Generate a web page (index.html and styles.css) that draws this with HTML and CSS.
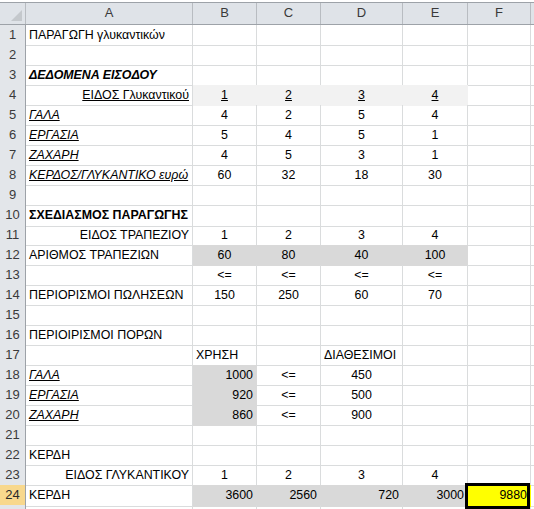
FILE: index.html
```html
<!DOCTYPE html>
<html>
<head>
<meta charset="utf-8">
<link rel="stylesheet" href="styles.css">
</head>
<body>
<div class="sheet">
  <div class="row hdr">
    <div class="corner"><span class="tri"></span></div>
    <div class="ch">A</div><div class="ch">B</div><div class="ch">C</div><div class="ch">D</div><div class="ch">E</div><div class="ch">F</div><div class="ch last"></div>
  </div>

  <div class="row"><div class="rh">1</div><div class="c">ΠΑΡΑΓΩΓΗ γλυκαντικών</div><div class="c"></div><div class="c"></div><div class="c"></div><div class="c"></div><div class="c"></div><div class="c"></div></div>
  <div class="row"><div class="rh">2</div><div class="c"></div><div class="c"></div><div class="c"></div><div class="c"></div><div class="c"></div><div class="c"></div><div class="c"></div></div>
  <div class="row"><div class="rh">3</div><div class="c bi">ΔΕΔΟΜΕΝΑ ΕΙΣΟΔΟΥ</div><div class="c"></div><div class="c"></div><div class="c"></div><div class="c"></div><div class="c"></div><div class="c"></div></div>
  <div class="row"><div class="rh">4</div><div class="c r"><u>ΕΙΔΟΣ Γλυκαντικού</u></div><div class="c m lt"><u>1</u></div><div class="c m lt"><u>2</u></div><div class="c m lt"><u>3</u></div><div class="c m lt"><u>4</u></div><div class="c"></div><div class="c"></div></div>
  <div class="row"><div class="rh">5</div><div class="c iu"><u>ΓΑΛΑ</u></div><div class="c m">4</div><div class="c m">2</div><div class="c m">5</div><div class="c m">4</div><div class="c"></div><div class="c"></div></div>
  <div class="row"><div class="rh">6</div><div class="c iu"><u>ΕΡΓΑΣΙΑ</u></div><div class="c m">5</div><div class="c m">4</div><div class="c m">5</div><div class="c m">1</div><div class="c"></div><div class="c"></div></div>
  <div class="row"><div class="rh">7</div><div class="c iu"><u>ΖΑΧΑΡΗ</u></div><div class="c m">4</div><div class="c m">5</div><div class="c m">3</div><div class="c m">1</div><div class="c"></div><div class="c"></div></div>
  <div class="row"><div class="rh">8</div><div class="c iu"><u>ΚΕΡΔΟΣ/ΓΛΥΚΑΝΤΙΚΟ ευρώ</u></div><div class="c m">60</div><div class="c m">32</div><div class="c m">18</div><div class="c m">30</div><div class="c"></div><div class="c"></div></div>
  <div class="row"><div class="rh">9</div><div class="c"></div><div class="c"></div><div class="c"></div><div class="c"></div><div class="c"></div><div class="c"></div><div class="c"></div></div>
  <div class="row"><div class="rh">10</div><div class="c b spill">ΣΧΕΔΙΑΣΜΟΣ ΠΑΡΑΓΩΓΗΣ</div><div class="c"></div><div class="c"></div><div class="c"></div><div class="c"></div><div class="c"></div><div class="c"></div></div>
  <div class="row"><div class="rh">11</div><div class="c r">ΕΙΔΟΣ ΤΡΑΠΕΖΙΟΥ</div><div class="c m">1</div><div class="c m">2</div><div class="c m">3</div><div class="c m">4</div><div class="c"></div><div class="c"></div></div>
  <div class="row"><div class="rh">12</div><div class="c">ΑΡΙΘΜΟΣ ΤΡΑΠΕΖΙΩΝ</div><div class="c m g">60</div><div class="c m g">80</div><div class="c m g">40</div><div class="c m g">100</div><div class="c"></div><div class="c"></div></div>
  <div class="row"><div class="rh">13</div><div class="c"></div><div class="c m">&lt;=</div><div class="c m">&lt;=</div><div class="c m">&lt;=</div><div class="c m">&lt;=</div><div class="c"></div><div class="c"></div></div>
  <div class="row"><div class="rh">14</div><div class="c">ΠΕΡΙΟΡΙΣΜΟΙ ΠΩΛΗΣΕΩΝ</div><div class="c m">150</div><div class="c m">250</div><div class="c m">60</div><div class="c m">70</div><div class="c"></div><div class="c"></div></div>
  <div class="row"><div class="rh">15</div><div class="c"></div><div class="c"></div><div class="c"></div><div class="c"></div><div class="c"></div><div class="c"></div><div class="c"></div></div>
  <div class="row"><div class="rh">16</div><div class="c">ΠΕΡΙΟΙΡΙΣΜΟΙ ΠΟΡΩΝ</div><div class="c"></div><div class="c"></div><div class="c"></div><div class="c"></div><div class="c"></div><div class="c"></div></div>
  <div class="row"><div class="rh">17</div><div class="c"></div><div class="c">ΧΡΗΣΗ</div><div class="c"></div><div class="c">ΔΙΑΘΕΣΙΜΟΙ</div><div class="c"></div><div class="c"></div><div class="c"></div></div>
  <div class="row"><div class="rh">18</div><div class="c iu"><u>ΓΑΛΑ</u></div><div class="c r g">1000</div><div class="c m">&lt;=</div><div class="c m">450</div><div class="c"></div><div class="c"></div><div class="c"></div></div>
  <div class="row"><div class="rh">19</div><div class="c iu"><u>ΕΡΓΑΣΙΑ</u></div><div class="c r g">920</div><div class="c m">&lt;=</div><div class="c m">500</div><div class="c"></div><div class="c"></div><div class="c"></div></div>
  <div class="row"><div class="rh">20</div><div class="c iu"><u>ΖΑΧΑΡΗ</u></div><div class="c r g">860</div><div class="c m">&lt;=</div><div class="c m">900</div><div class="c"></div><div class="c"></div><div class="c"></div></div>
  <div class="row"><div class="rh">21</div><div class="c"></div><div class="c"></div><div class="c"></div><div class="c"></div><div class="c"></div><div class="c"></div><div class="c"></div></div>
  <div class="row"><div class="rh">22</div><div class="c">ΚΕΡΔΗ</div><div class="c"></div><div class="c"></div><div class="c"></div><div class="c"></div><div class="c"></div><div class="c"></div></div>
  <div class="row"><div class="rh">23</div><div class="c r">ΕΙΔΟΣ ΓΛΥΚΑΝΤΙΚΟΥ</div><div class="c m">1</div><div class="c m">2</div><div class="c m">3</div><div class="c m">4</div><div class="c"></div><div class="c"></div></div>
  <div class="row"><div class="rh sel">24</div><div class="c">ΚΕΡΔΗ</div><div class="c r g">3600</div><div class="c r g">2560</div><div class="c r g">720</div><div class="c r g">3000</div><div class="c r y">9880</div><div class="c"></div></div>
  <div class="row short"><div class="rh"></div><div class="c"></div><div class="c"></div><div class="c"></div><div class="c"></div><div class="c"></div><div class="c"></div><div class="c"></div></div>
</div>
</body>
</html>
```

FILE: styles.css
```css
html, body {
  margin: 0;
  padding: 0;
  background: #ffffff;
}
.sheet {
  width: 534px;
  height: 509px;
  overflow: hidden;
  padding-top: 2px;
  box-sizing: border-box;
  font-family: "Liberation Sans", Arial, sans-serif;
  font-size: 12.4px;
  color: #000;
}
.row {
  display: grid;
  grid-template-columns: 26px 167px 64px 64px 82px 65px 63px 1fr;
  height: 20px;
}
.row.short { height: 6px; }
.row.hdr {
  height: 21px;
  background: #dfe3e8;
  border-top: 1px solid #9da2a8;
  border-bottom: 1px solid #9da2a8;
}
.corner {
  position: relative;
  border-right: 1px solid #b8bcc1;
  background: #dfe3e8;
}
.tri {
  position: absolute;
  right: 3px;
  bottom: 3px;
  width: 0;
  height: 0;
  border-left: 11px solid transparent;
  border-bottom: 11px solid #c4c8cc;
}
.ch {
  border-right: 1px solid #b8bcc1;
  text-align: center;
  line-height: 20px;
  font-size: 13px;
  color: #3a3a3a;
}
.ch.last { border-right: none; }
.rh {
  background: #e3e6ea;
  border-right: 1px solid #9da2a8;
  border-bottom: 1px solid #c3c7cc;
  text-align: center;
  line-height: 20px;
  font-size: 13px;
  color: #3a3a3a;
  box-sizing: border-box;
}
.rh.sel {
  background: #f8d88d;
  border-bottom-color: #e2b866;
  color: #2a2a2a;
}
.c {
  box-sizing: border-box;
  border-right: 1px solid #dadcdd;
  border-bottom: 1px solid #dadcdd;
  padding: 0 3px;
  line-height: 21px;
  white-space: nowrap;
  overflow: hidden;
}
.c.spill { overflow: visible; }
.r { text-align: right; }
.m { text-align: center; }
.b { font-weight: bold; }
.bi { font-weight: bold; font-style: italic; }
.iu { font-style: italic; }
.lt {
  background: #f2f2f2;
  border-right-color: #f2f2f2;
  border-bottom-color: #f2f2f2;
}
.g {
  background: #d9d9d9;
  border-right-color: #d9d9d9;
  border-bottom-color: #d9d9d9;
}
.y {
  position: relative;
  overflow: visible;
  background: #ffff00;
  border-right-color: #ffff00;
  border-bottom-color: #ffff00;
}
.y::after {
  content: "";
  position: absolute;
  left: -3px;
  top: -2px;
  right: 0;
  bottom: -3px;
  border: 3px solid #000;
}
```
